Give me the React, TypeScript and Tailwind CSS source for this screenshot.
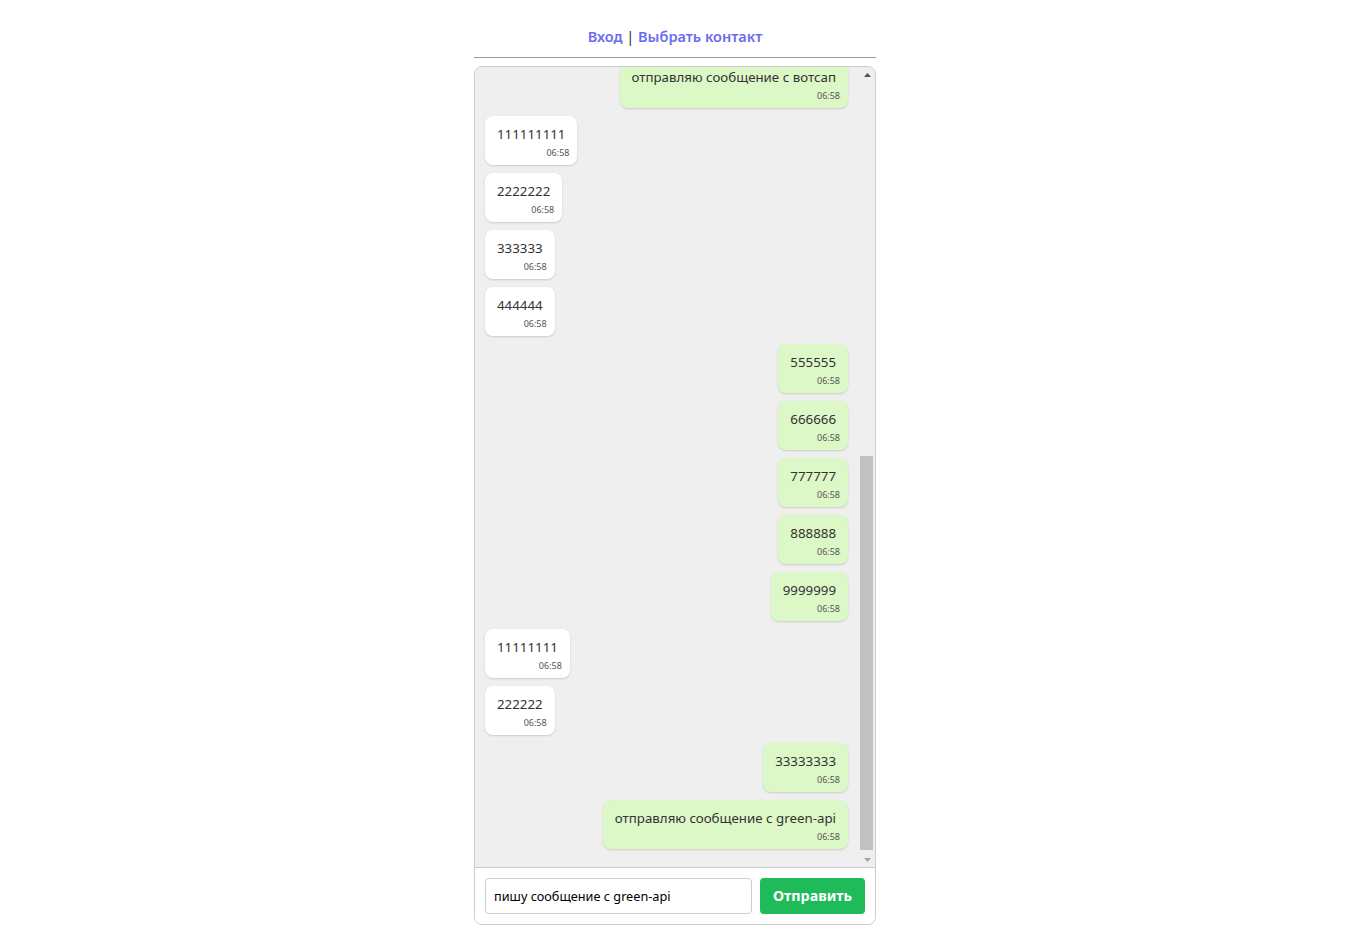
import React, { useLayoutEffect, useRef } from 'react';

interface Message {
  text: string;
  out: boolean;
  time: string;
}

const messages: Message[] = [
  { text: 'отправляю сообщение с вотсап', out: true, time: '06:58' },
  { text: '111111111', out: false, time: '06:58' },
  { text: '2222222', out: false, time: '06:58' },
  { text: '333333', out: false, time: '06:58' },
  { text: '444444', out: false, time: '06:58' },
  { text: '555555', out: true, time: '06:58' },
  { text: '666666', out: true, time: '06:58' },
  { text: '777777', out: true, time: '06:58' },
  { text: '888888', out: true, time: '06:58' },
  { text: '9999999', out: true, time: '06:58' },
  { text: '11111111', out: false, time: '06:58' },
  { text: '222222', out: false, time: '06:58' },
  { text: '33333333', out: true, time: '06:58' },
  { text: 'отправляю сообщение с green-api', out: true, time: '06:58' },
];

export default function App() {
  const listRef = useRef<HTMLDivElement>(null);

  // keep the chat scrolled to the latest message
  useLayoutEffect(() => {
    if (listRef.current) listRef.current.scrollTop = listRef.current.scrollHeight;
  }, []);

  return (
    <div className="min-h-screen bg-white font-['Noto_Sans',sans-serif] text-[#333]">
      <div className="flex justify-center pr-[10px]">
        <div className="w-[402px]">
          {/* Header */}
          <div className="h-[58px] border-b border-[#999] pt-[26px] text-center text-[14.5px] leading-5 font-semibold">
            <span className="text-[#6c6cf0]">Вход</span>
            <span className="text-[#333] font-normal"> | </span>
            <span className="text-[#6c6cf0]">Выбрать контакт</span>
          </div>

          {/* Chat */}
          <div className="mt-[8px] border border-[#ccc] rounded-lg overflow-hidden">
            <div className="flex h-[800px] bg-[#efefef]">
              <div ref={listRef} className="flex-1 overflow-hidden pl-[10px] pr-[12px] pt-[10px] pb-[18px] flex flex-col gap-[8px]">
                {messages.map((m, i) => (
                  <div key={i} className={`flex ${m.out ? 'justify-end' : 'justify-start'}`}>
                    <div
                      className={`rounded-lg pl-3 pr-2 pt-2 pb-[5px] shadow-[0_1px_2px_rgba(0,0,0,0.15)] ${m.out ? 'bg-[#dcf8c6]' : 'bg-white'}`}
                    >
                      <div className="text-[13.3px] leading-5 pr-1 whitespace-nowrap">{m.text}</div>
                      <div className="mt-[2px] text-[9px] leading-[14px] text-right text-[#555]">{m.time}</div>
                    </div>
                  </div>
                ))}
              </div>

              {/* scrollbar */}
              <div className="w-[15px] flex flex-col bg-[#efefef]">
                <div className="h-[15px] flex items-center justify-center">
                  <svg width="7" height="4" viewBox="0 0 7 4"><path d="M0 4 L3.5 0 L7 4 Z" fill="#505050" /></svg>
                </div>
                <div className="flex-1 flex flex-col justify-end pb-[2px]">
                  <div className="h-[394px] w-[13px] bg-[#c1c1c1]" />
                </div>
                <div className="h-[15px] flex items-center justify-center">
                  <svg width="7" height="4" viewBox="0 0 7 4"><path d="M0 0 L7 0 L3.5 4 Z" fill="#a3a3a3" /></svg>
                </div>
              </div>
            </div>

            {/* Input */}
            <div className="border-t border-[#ccc] bg-white flex items-center gap-[8px] px-[10px] pt-[10px] pb-[10px]">
              <input
                defaultValue="пишу сообщение с green-api"
                className="flex-1 h-[36px] border border-[#ccc] rounded-[4px] px-[8px] text-[12.7px] text-black outline-none"
              />
              <button className="w-[105px] h-[36px] rounded-[4px] bg-[#1fbb5a] text-white text-[14.3px] font-bold">
                Отправить
              </button>
            </div>
          </div>
        </div>
      </div>
    </div>
  );
}
